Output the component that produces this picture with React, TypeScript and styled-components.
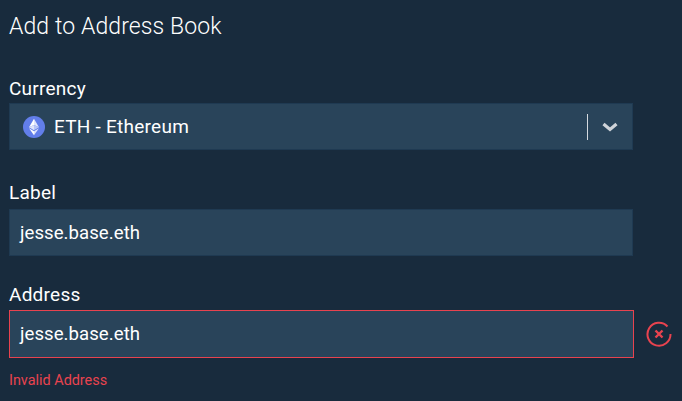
import React from "react";
import styled, { createGlobalStyle } from "styled-components";

const Global = createGlobalStyle`
  html, body { margin: 0; padding: 0; background: #182b3d; }
  body { font-family: Roboto, "Liberation Sans", sans-serif; }
`;

const Page = styled.div`
  width: 682px;
  height: 401px;
  overflow: hidden;
  box-sizing: border-box;
  padding: 13px 0 0 9px;
  background: #182b3d;
  color: #fff;
`;

const Title = styled.h1`
  margin: 0 0 35px;
  font-size: 23px;
  line-height: 28px;
  letter-spacing: 0.1px;
  font-weight: 300;
  color: #fff;
`;

const Field = styled.div<{ $gap: number }>`
  display: flex;
  flex-direction: column;
  margin-bottom: ${(p) => p.$gap}px;
`;

const Label = styled.label<{ $top?: number; $height?: number }>`
  display: block;
  font-size: 19px;
  letter-spacing: 0.25px;
  line-height: 20px;
  height: ${(p) => p.$height ?? 28}px;
  padding-top: ${(p) => p.$top ?? 3}px;
  box-sizing: border-box;
  font-weight: 400;
  color: #fff;
`;

const Row = styled.div`
  display: flex;
  align-items: center;
`;

const Box = styled.div<{ $invalid?: boolean }>`
  box-sizing: border-box;
  width: ${(p) => (p.$invalid ? "625px" : "624px")};
  height: ${(p) => (p.$invalid ? "48px" : "47px")};
  display: flex;
  align-items: center;
  padding: 0 0 0 10px;
  background: #29445a;
  border: 1px solid ${(p) => (p.$invalid ? "#e8434f" : "#1f3a52")};
  font-size: 18.6px;
  letter-spacing: 0.05px;
  color: #fff;
`;

const CoinIcon = styled.svg`
  width: 22px;
  height: 22px;
  margin: 0 9px 0 3px;
  flex: none;
`;

const SelectText = styled.span`
  flex: 1;
  font-size: 19px;
  letter-spacing: 0.25px;
`;

const Divider = styled.span`
  width: 1px;
  height: 26px;
  background: #d5dadf;
`;

const Chevron = styled.svg`
  width: 16px;
  height: 10px;
  margin: 0 14px 0 14px;
  flex: none;
`;

const ClearIcon = styled.svg`
  width: 26px;
  height: 26px;
  margin-left: 12px;
  flex: none;
`;

const ErrorText = styled.div`
  margin-top: 15px;
  font-size: 14.4px;
  line-height: 16px;
  color: #e8434f;
`;

export default function App() {
  return (
    <Page>
      <Global />
      <Title>Add to Address Book</Title>
      <Field $gap={31}>
        <Label $height={27}>Currency</Label>
        <Box>
          <CoinIcon viewBox="0 0 23 23">
            <circle cx="11.5" cy="11.5" r="11.5" fill="#627eea" />
            <path d="M11.5 3v6.3l5.2 2.4z" fill="#dfe5fb" />
            <path d="M11.5 3L6.3 11.7l5.2-2.4z" fill="#fff" />
            <path d="M11.5 9.3v5.5l5.2-3.1z" fill="#b8c5f6" />
            <path d="M11.5 9.3L6.3 11.7l5.2 3.1z" fill="#dfe5fb" />
            <path d="M11.5 15.9V20l5.2-7.2z" fill="#dfe5fb" />
            <path d="M11.5 15.9l-5.2-3.1L11.5 20z" fill="#fff" />
          </CoinIcon>
          <SelectText>ETH - Ethereum</SelectText>
          <Divider />
          <Chevron viewBox="0 0 16 10">
            <path d="M1.5 2l6.5 5.5L14.5 2" fill="none" stroke="#cfd4d9" strokeWidth="3.2" />
          </Chevron>
        </Box>
      </Field>
      <Field $gap={26}>
        <Label $top={2}>Label</Label>
        <Box>jesse.base.eth</Box>
      </Field>
      <Label>Address</Label>
      <Row>
        <Box $invalid>jesse.base.eth</Box>
        <ClearIcon viewBox="0 0 26 26">
          <path
            d="M21.5 5.5A11.5 11.5 0 1 0 24.5 13"
            fill="none"
            stroke="#e8434f"
            strokeWidth="2"
          />
          <path
            d="M9.5 9.5l7 7M16.5 9.5l-7 7"
            fill="none"
            stroke="#e8434f"
            strokeWidth="2.4"
          />
        </ClearIcon>
      </Row>
      <ErrorText>Invalid Address</ErrorText>
    </Page>
  );
}
